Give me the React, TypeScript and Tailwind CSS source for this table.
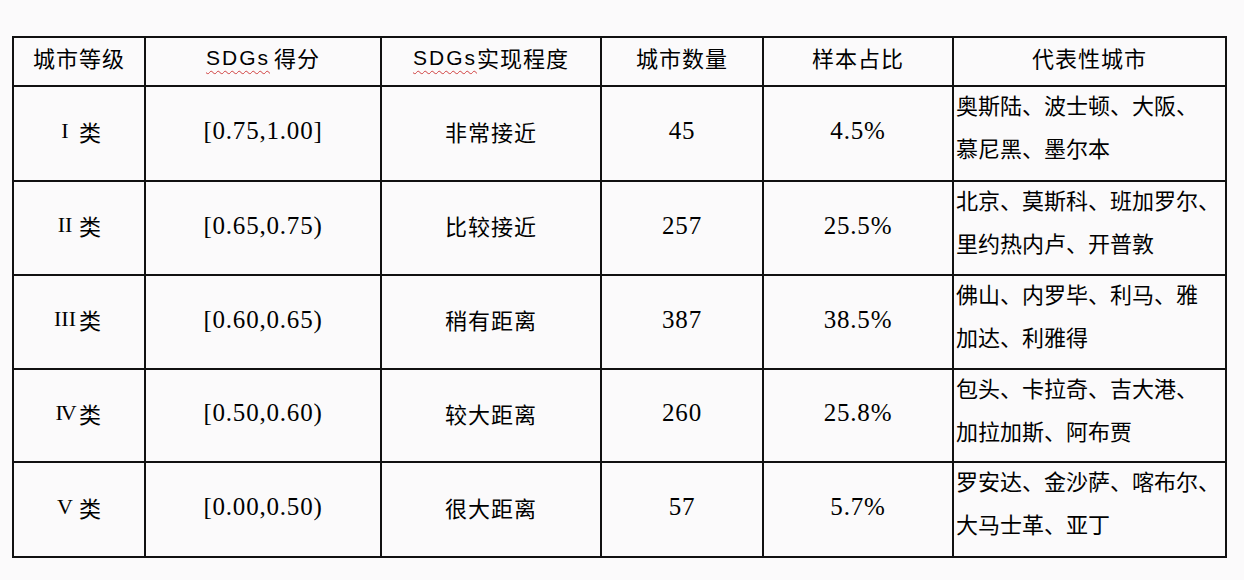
const cjk = "font-['Noto_Sans_CJK_SC',sans-serif]";
const serif = "font-['Liberation_Serif','Noto_Sans_CJK_SC',serif]";

type Row = {
  level: string;
  range: string;
  degree: string;
  count: string;
  share: string;
  cities: [string, string];
};

const rows: Row[] = [
  { level: "I", range: "[0.75,1.00]", degree: "非常接近", count: "45", share: "4.5%", cities: ["奥斯陆、波士顿、大阪、", "慕尼黑、墨尔本"] },
  { level: "II", range: "[0.65,0.75)", degree: "比较接近", count: "257", share: "25.5%", cities: ["北京、莫斯科、班加罗尔、", "里约热内卢、开普敦"] },
  { level: "III", range: "[0.60,0.65)", degree: "稍有距离", count: "387", share: "38.5%", cities: ["佛山、内罗毕、利马、雅", "加达、利雅得"] },
  { level: "IV", range: "[0.50,0.60)", degree: "较大距离", count: "260", share: "25.8%", cities: ["包头、卡拉奇、吉大港、", "加拉加斯、阿布贾"] },
  { level: "V", range: "[0.00,0.50)", degree: "很大距离", count: "57", share: "5.7%", cities: ["罗安达、金沙萨、喀布尔、", "大马士革、亚丁"] },
];

const cell = "bg-[#fbfafb] flex items-center justify-center pb-[6px] text-black";
const head = "bg-[#fbfafb] flex items-center justify-center pb-[9px] text-black";
const cjkText = `${cjk} text-[22px] tracking-[1px] leading-none`;
const numText = `${serif} text-[25px] tracking-[0.8px] leading-none`;

function Sdgs() {
  return (
    <span className="font-['Liberation_Sans',sans-serif] text-[21px] tracking-[2px] leading-none underline decoration-wavy decoration-[#d04040] decoration-1 underline-offset-[5px]">
      SDGs
    </span>
  );
}

export default function App() {
  return (
    <div className="min-h-[580px] w-full bg-[#fbfafb] pt-[36px] pl-[12px]">
      <div className="grid w-[1215px] grid-cols-[130px_234px_218px_160px_188px_271px] grid-rows-[47px_93px_92px_92px_91px_93px] gap-[2px] bg-[#111] p-[2px]">
        <div className={head}>
          <span className={cjkText}>城市等级</span>
        </div>
        <div className={head}>
          <span className="flex items-center">
            <Sdgs />
            <span className={`${cjkText} ml-[4px]`}>得分</span>
          </span>
        </div>
        <div className={head}>
          <span className="flex items-center">
            <Sdgs />
            <span className={cjkText}>实现程度</span>
          </span>
        </div>
        <div className={head}>
          <span className={cjkText}>城市数量</span>
        </div>
        <div className={head}>
          <span className={cjkText}>样本占比</span>
        </div>
        <div className={head}>
          <span className={cjkText}>代表性城市</span>
        </div>

        {rows.map((row) => (
          <Cells key={row.level} row={row} />
        ))}
      </div>
    </div>
  );
}

function Cells({ row }: { row: Row }) {
  return (
    <>
      <div className={cell}>
        <span className="flex items-center">
          <span className="flex w-[16px] justify-center">
            <span className={`${serif} text-[22px] leading-none ${row.level === "IV" ? "tracking-[-2px]" : "tracking-[0px]"}`}>
              {row.level}
            </span>
          </span>
          <span className={`${cjk} ml-[6px] text-[22px] leading-none`}>类</span>
        </span>
      </div>
      <div className={cell}>
        <span className={numText}>{row.range}</span>
      </div>
      <div className={cell}>
        <span className={cjkText}>{row.degree}</span>
      </div>
      <div className={cell}>
        <span className={numText}>{row.count}</span>
      </div>
      <div className={cell}>
        <span className={numText}>{row.share}</span>
      </div>
      <div className="bg-[#fbfafb] pl-[2px] text-black">
        <div className={`${cjk} -mt-[4px] whitespace-nowrap text-[22px] leading-[43px]`}>
          <div>{row.cities[0]}</div>
          <div>{row.cities[1]}</div>
        </div>
      </div>
    </>
  );
}
